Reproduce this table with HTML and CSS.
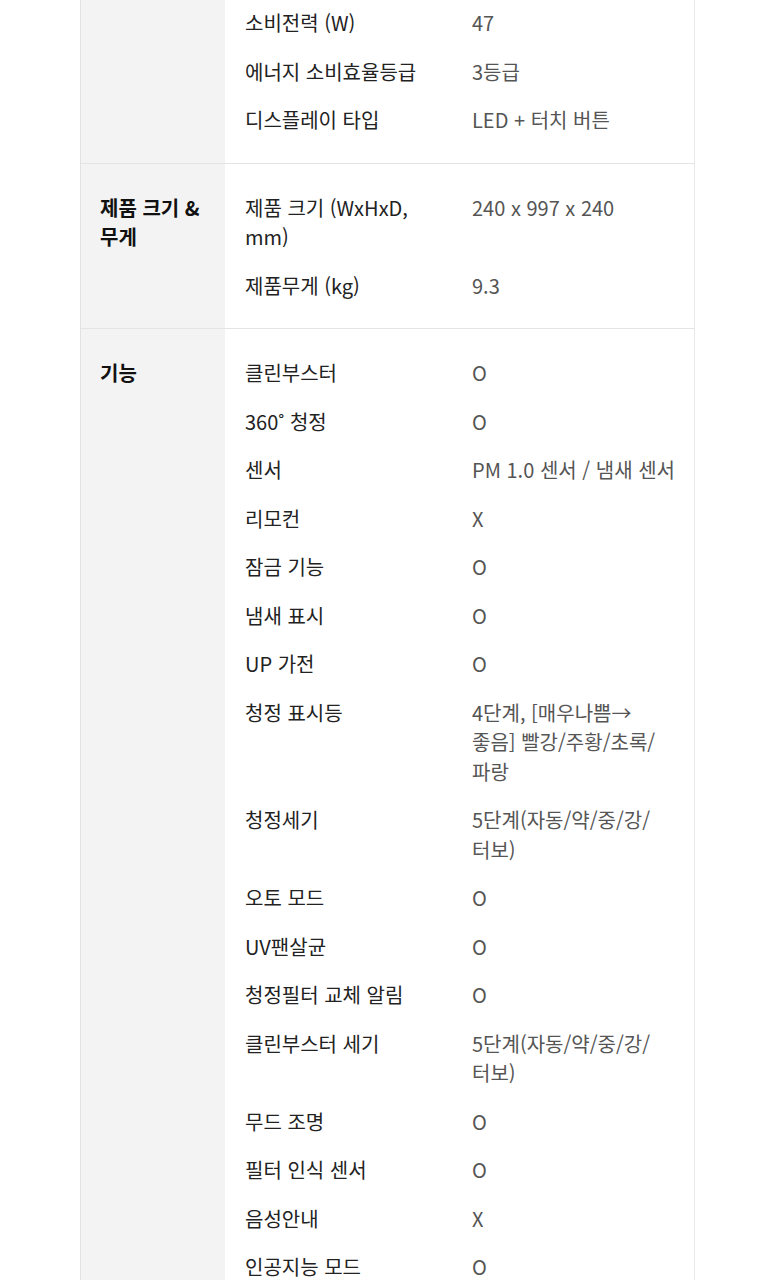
FILE: index.html
```html
<!DOCTYPE html>
<html lang="ko">
<head>
<meta charset="utf-8">
<link rel="stylesheet" href="styles.css">
</head>
<body>
<div class="spec">
  <section class="group group-first">
    <div class="cat"></div>
    <dl class="rows">
      <div class="row"><dt>소비전력 (W)</dt><dd>47</dd></div>
      <div class="row"><dt>에너지 소비효율등급</dt><dd>3등급</dd></div>
      <div class="row"><dt>디스플레이 타입</dt><dd>LED + 터치 버튼</dd></div>
    </dl>
  </section>
  <section class="group">
    <div class="cat">제품 크기 &amp; 무게</div>
    <dl class="rows">
      <div class="row"><dt>제품 크기 (WxHxD, mm)</dt><dd>240 x 997 x 240</dd></div>
      <div class="row"><dt>제품무게 (kg)</dt><dd>9.3</dd></div>
    </dl>
  </section>
  <section class="group">
    <div class="cat">기능</div>
    <dl class="rows">
      <div class="row"><dt>클린부스터</dt><dd>O</dd></div>
      <div class="row"><dt>360˚ 청정</dt><dd>O</dd></div>
      <div class="row"><dt>센서</dt><dd>PM 1.0 센서 / 냄새 센서</dd></div>
      <div class="row"><dt>리모컨</dt><dd>X</dd></div>
      <div class="row"><dt>잠금 기능</dt><dd>O</dd></div>
      <div class="row"><dt>냄새 표시</dt><dd>O</dd></div>
      <div class="row"><dt>UP 가전</dt><dd>O</dd></div>
      <div class="row"><dt>청정 표시등</dt><dd>4단계, [매우나쁨→<br>좋음] 빨강/<wbr>주황/<wbr>초록/<wbr>파랑</dd></div>
      <div class="row"><dt>청정세기</dt><dd>5단계(자동/<wbr>약/<wbr>중/<wbr>강/<wbr>터보)</dd></div>
      <div class="row"><dt>오토 모드</dt><dd>O</dd></div>
      <div class="row"><dt>UV팬살균</dt><dd>O</dd></div>
      <div class="row"><dt>청정필터 교체 알림</dt><dd>O</dd></div>
      <div class="row"><dt>클린부스터 세기</dt><dd>5단계(자동/<wbr>약/<wbr>중/<wbr>강/<wbr>터보)</dd></div>
      <div class="row"><dt>무드 조명</dt><dd>O</dd></div>
      <div class="row"><dt>필터 인식 센서</dt><dd>O</dd></div>
      <div class="row"><dt>음성안내</dt><dd>X</dd></div>
      <div class="row"><dt>인공지능 모드</dt><dd>O</dd></div>
    </dl>
  </section>
</div>
</body>
</html>
```

FILE: styles.css
```css
html, body {
  margin: 0;
  padding: 0;
  background: #ffffff;
}

body {
  font-family: "Noto Sans CJK KR", "Noto Sans", sans-serif;
  font-size: 20px;
  line-height: 29.5px;
  color: #222222;
  overflow: hidden;
}

.spec {
  margin-left: 80px;
  width: 613px;
  border-left: 1px solid #e2e2e2;
  border-right: 1px solid #e8e8e8;
}

.group {
  display: grid;
  grid-template-columns: 144px 1fr;
  border-bottom: 1px solid #e4e4e4;
}

.group-first {
  margin-top: -21px;
}

.cat {
  background: #f3f3f3;
  padding: 29px 20px 29px 19px;
  font-weight: 700;
  color: #111111;
}

.rows {
  margin: 0;
  padding: 29px 0 28px 0;
  display: flex;
  flex-direction: column;
  gap: 19px;
}

.row {
  display: grid;
  grid-template-columns: 247px 1fr;
}

.row dt {
  margin: 0;
  padding-left: 20px;
  padding-right: 24px;
  color: #222222;
}

.row dd {
  margin: 0;
  padding-right: 12px;
  color: #555555;
  word-break: keep-all;
}
```
